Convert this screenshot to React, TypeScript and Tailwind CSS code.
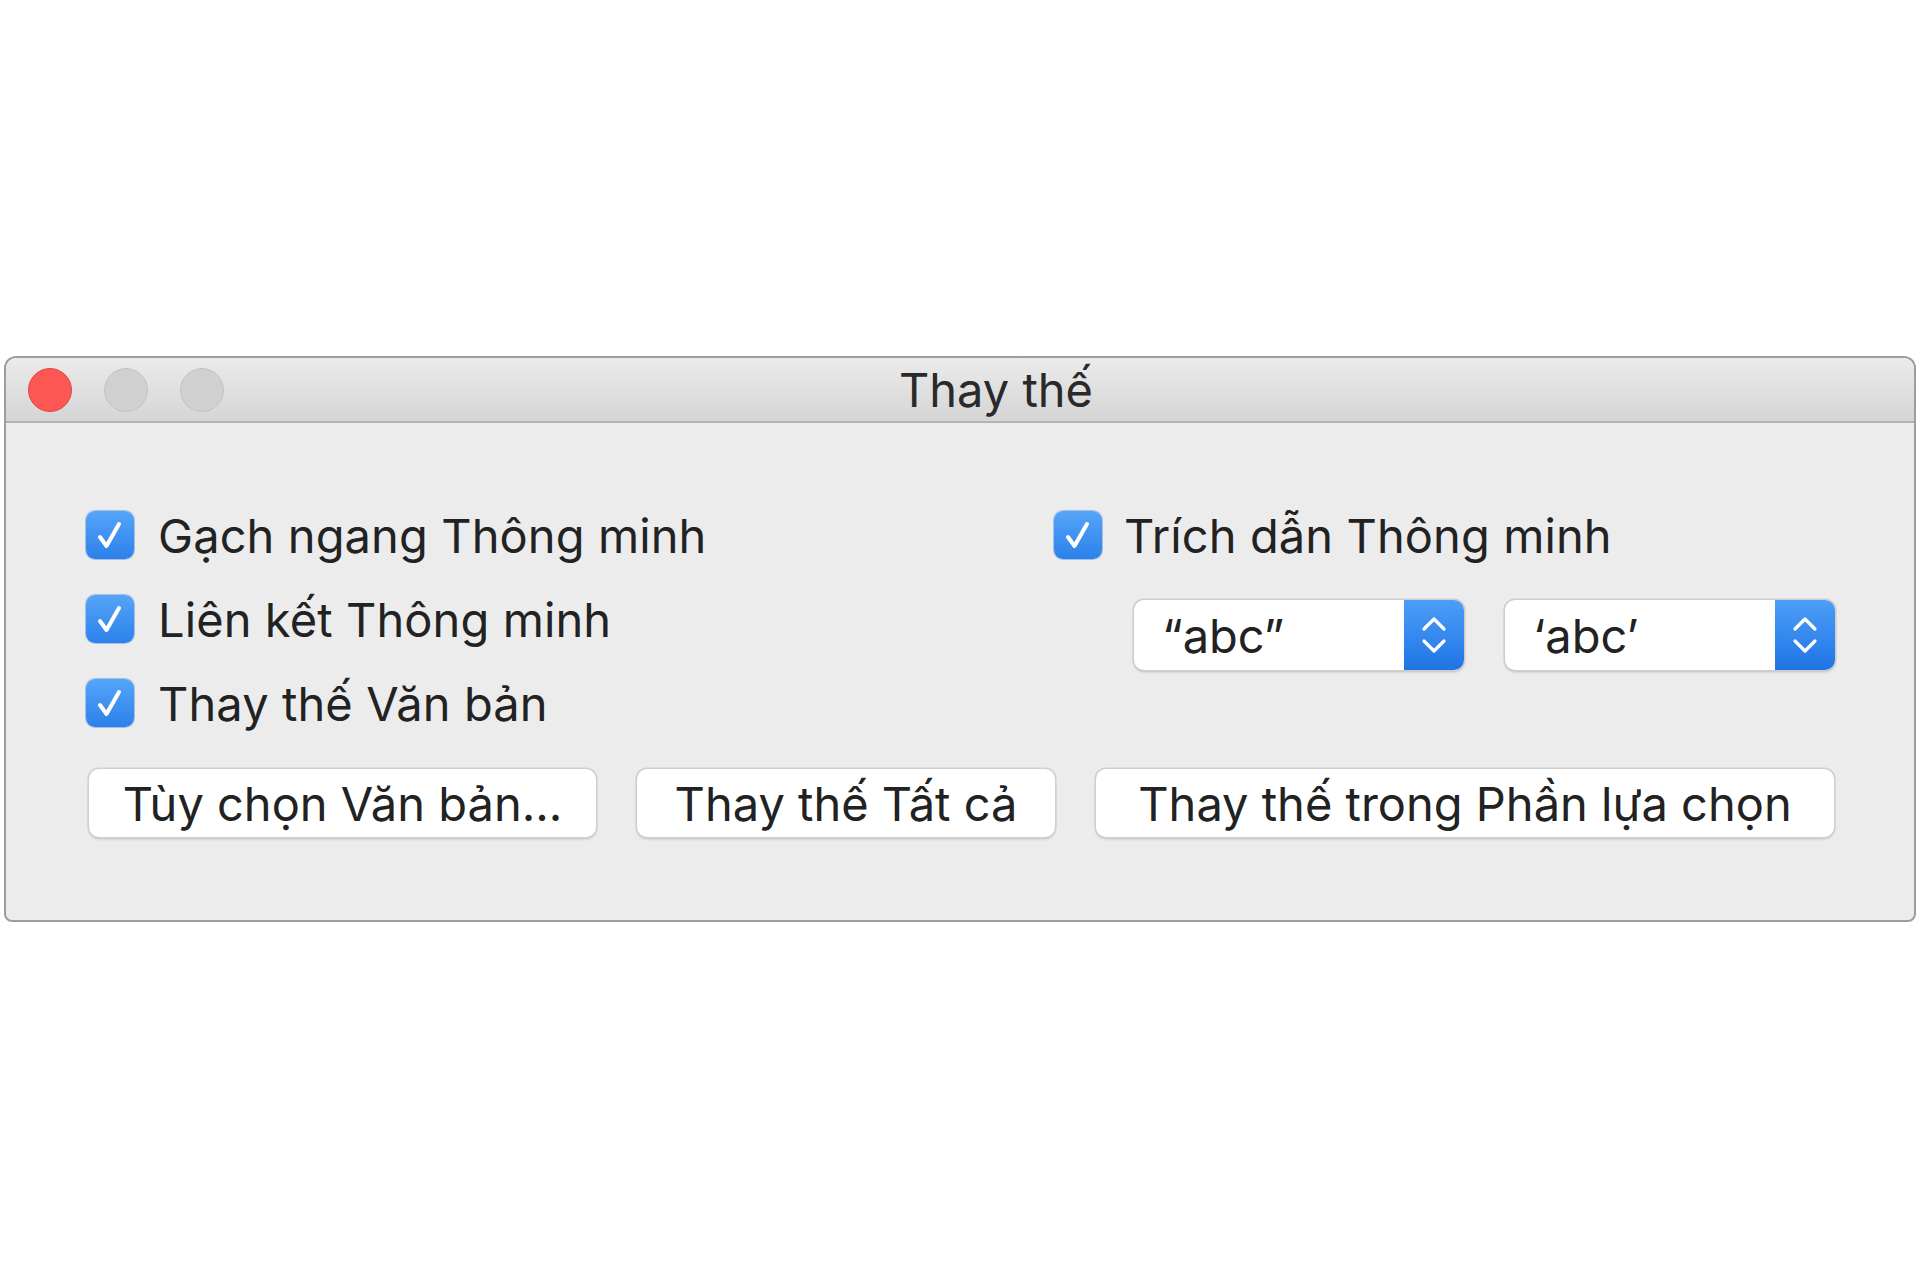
import React from "react";

function Check() {
  return (
    <div className="w-[48px] h-[48px] rounded-[9px] bg-gradient-to-b from-[#55a5f8] to-[#2c80ea] shadow-[0_0_0_1px_rgba(40,110,220,0.35)] flex items-center justify-center shrink-0">
      <svg width="40" height="40" viewBox="0 0 40 40" fill="none">
        <path d="M10 22 L16.5 31 L29 9" stroke="white" strokeWidth="4" strokeLinecap="round" strokeLinejoin="round" />
      </svg>
    </div>
  );
}

function CheckRow({ label }: { label: string }) {
  return (
    <div className="h-[84px] flex items-center gap-[24px]">
      <Check />
      <span className="text-[47px] leading-none text-[#222] tracking-[0.1px]">{label}</span>
    </div>
  );
}

function Popup({ text }: { text: string }) {
  return (
    <div className="w-[330px] h-[70px] rounded-[10px] bg-white flex shadow-[0_0_0_1.5px_#cdcdcd,0_2px_3px_rgba(0,0,0,0.2)] overflow-hidden">
      <div className="flex-1 flex items-center pl-[28px] text-[47px] leading-none text-[#222]">{text}</div>
      <div className="w-[60px] bg-gradient-to-b from-[#4c9ef7] to-[#1f74e5] flex items-center justify-center">
        <svg width="28" height="48" viewBox="0 0 28 48" fill="none">
          <path d="M4 18 L14 8 L24 18" stroke="white" strokeWidth="3.2" strokeLinecap="round" strokeLinejoin="round" />
          <path d="M4 30 L14 40 L24 30" stroke="white" strokeWidth="3.2" strokeLinecap="round" strokeLinejoin="round" />
        </svg>
      </div>
    </div>
  );
}

function Btn({ label, w }: { label: string; w: string }) {
  return (
    <div className={`${w} h-[68px] rounded-[10px] bg-white flex items-center justify-center shadow-[0_0_0_1.5px_#cfcfcf,0_2px_3px_rgba(0,0,0,0.2)] text-[47px] leading-none text-[#222]`}>
      {label}
    </div>
  );
}

export default function App() {
  return (
    <div className="w-[1920px] h-[1280px] bg-white pt-[356px] pl-[4px]" style={{ fontFamily: "Inter, 'Noto Sans', sans-serif" }}>
      <div className="w-[1912px] h-[566px] border-2 border-[#9d9d9d] rounded-t-[12px] rounded-b-[8px] overflow-hidden flex flex-col bg-[#ececec]">
        <div className="h-[65px] shrink-0 bg-gradient-to-b from-[#ebebeb] to-[#d5d5d5] border-b-2 border-[#b3b3b3] grid grid-cols-[1fr_auto_1fr] items-center">
          <div className="flex items-center gap-[32px] pl-[22px]">
            <div className="w-[44px] h-[44px] rounded-full bg-[#fc5753] border-[1.5px] border-[#df4744]" />
            <div className="w-[44px] h-[44px] rounded-full bg-[#d0d0d0] border-[1.5px] border-[#c2c2c2]" />
            <div className="w-[44px] h-[44px] rounded-full bg-[#d0d0d0] border-[1.5px] border-[#c2c2c2]" />
          </div>
          <div className="text-[47px] leading-none text-[#2a2a2a] ml-[72px]">Thay thế</div>
          <div />
        </div>
        <div className="flex-1 flex flex-col pl-[80px] pt-[70px]">
          <div className="flex">
            <div className="w-[968px] flex flex-col">
              <CheckRow label="Gạch ngang Thông minh" />
              <CheckRow label="Liên kết Thông minh" />
              <CheckRow label="Thay thế Văn bản" />
            </div>
            <div className="flex flex-col">
              <div className="h-[84px] flex items-center gap-[22px]">
                <Check />
                <span className="text-[47px] leading-none text-[#222] tracking-[0.1px]">Trích dẫn Thông minh</span>
              </div>
              <div className="flex gap-[41px] mt-[23px] ml-[80px]">
                <Popup text="“abc”" />
                <Popup text="‘abc’" />
              </div>
            </div>
          </div>
          <div className="flex gap-[41px] mt-[24px] ml-[3px]">
            <Btn label="Tùy chọn Văn bản..." w="w-[507px]" />
            <Btn label="Thay thế Tất cả" w="w-[418px]" />
            <Btn label="Thay thế trong Phần lựa chọn" w="w-[738px]" />
          </div>
        </div>
      </div>
    </div>
  );
}
